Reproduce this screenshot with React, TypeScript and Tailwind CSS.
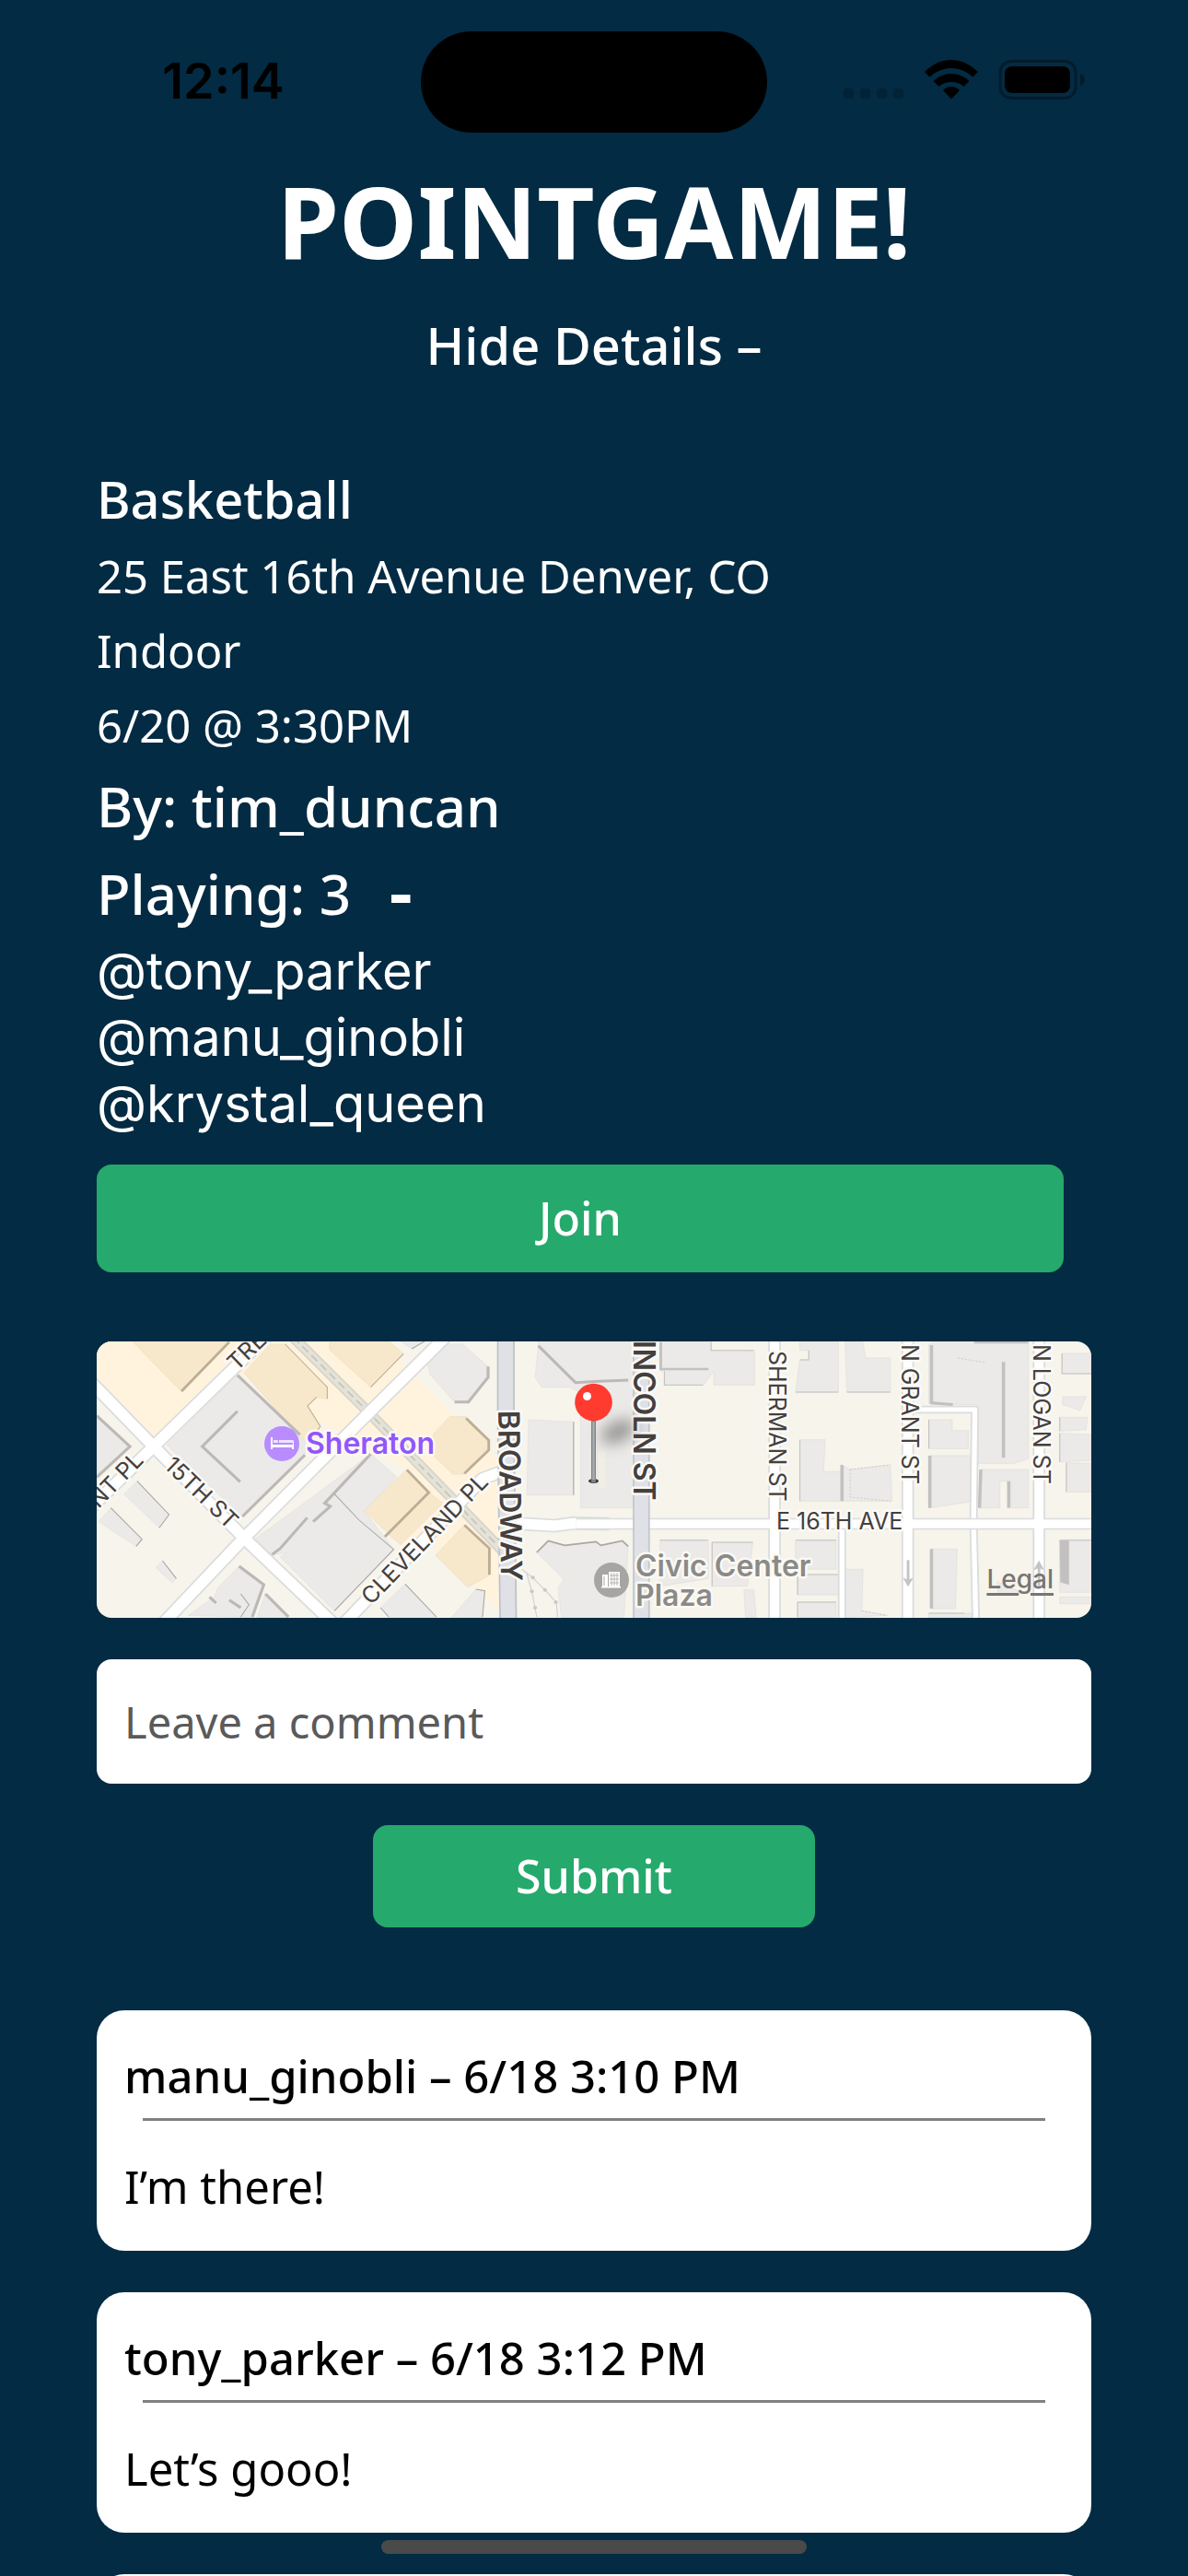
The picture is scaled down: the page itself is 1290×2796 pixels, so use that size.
import { useState } from "react";

const handles = ["@tony_parker", "@manu_ginobli", "@krystal_queen"];

const comments = [
  { title: "manu_ginobli – 6/18 3:10 PM", body: "I’m there!" },
  { title: "tony_parker – 6/18 3:12 PM", body: "Let’s gooo!" },
];

function StatusBar() {
  return (
    <header className="grid h-44 grid-cols-[1fr_376px_1fr] text-black">
      <div className="flex justify-center pt-[60px]">
        <span className="ml-7 font-['Inter'] text-[54px] leading-[56px] font-semibold">12:14</span>
      </div>
      <div className="mt-[34px] h-[110px] rounded-full bg-black" />
      <div className="flex items-start justify-end pt-[62px] pr-[111px]">
        <svg width="66" height="48" viewBox="0 0 66 48" aria-hidden="true">
          {[0, 18, 36, 54].map((x) => (
            <rect key={x} x={x} y="34" width="11" height="11" rx="4" fill="#022236" />
          ))}
        </svg>
        <svg className="ml-[21px]" width="60" height="48" viewBox="0 0 60 48" aria-hidden="true">
          <path d="M1 16Q14 3 30 3T59 16L53.500 21.500Q43 12 30 12T6.500 21.500Z" />
          <path d="M10.500 26Q19 18 30 18T49.500 26L43.500 32Q38 27 30 27T16.500 32Z" />
          <path d="M21 36Q25 32 30 32T39 36L30 45.500Z" />
        </svg>
        <svg className="ml-[21px]" width="95" height="48" viewBox="0 0 95 48" aria-hidden="true">
          <rect x="2" y="4.500" width="82" height="40" rx="12" fill="none" stroke="#021c2c" strokeWidth="3" />
          <rect x="7" y="10" width="71" height="29" rx="8" />
          <path d="M89 18Q94 20 94 24.500T89 31Z" fill="#021c2c" />
        </svg>
      </div>
    </header>
  );
}

const cream = [
  "42,47 520,47 215,365 42,180",
  "470,150 575,47 900,47 1010,160 1130,290 1265,430 1265,925 1080,725 965,710 855,600 985,465 700,300",
];

const tanBlocks = [
  "150,47 440,47 300,212",
  "490,150 570,57 615,57 743,197 743,235 710,230 683,258 722,325 700,365 665,365",
  "750,47 750,75 875,197 975,88 930,47",
  "1115,293 1165,293 1235,370 1235,400 1160,480 1125,480 1070,425 1065,350",
  "985,465 1052,540 1095,575 965,710 855,600",
  "1160,645 1235,720 1235,810 1170,848 1072,745",
];

const westBlocks = [
  "470,158 675,370 675,420 485,620 255,385",
  "42,290 143,390 42,490",
  "165,503 262,612 232,655 125,545",
  "85,590 180,692 162,715 48,635",
  "242,762 284,820 272,834 222,785",
  "1075,75 1095,57 1155,57 1232,130 1232,170 1170,245 1130,245 1055,155 1048,115",
  "875,415 955,490 855,600 945,725 765,925 600,750 620,735 575,745 525,690",
  "1385,57 1385,47 1680,47 1680,590 1513,590 1513,215 1480,197 1395,197 1375,165",
  "1355,303 1492,310 1492,548 1350,548",
  "1415,697 1465,712 1560,700 1575,712 1640,697 1658,715 1645,947 1455,947 1445,850 1462,822 1380,735",
  "475,780 550,840 515,947 320,940 400,880 410,850",
  "555,870 625,947 530,947",
  "980,838 1075,947 930,947 905,915",
  "1195,855 1222,860 1215,947 1120,947",
  "1040,47 1000,72 965,47",
];

const eastBlocks = [
  "217,47 370,47 370,77 502,80 502,190 378,190 378,145 347,190 228,190 228,145 217,145",
  "640,47 757,47 757,213 627,213 640,108 667,108 667,77 640,77",
  "778,47 830,47 840,102 915,102 915,213 783,213",
  "1032,60 1050,47 1335,47 1335,430 1290,445 1182,445 1182,255 1032,250",
  "1032,303 1103,303 1103,338 1152,338 1152,397 1032,397",
  "1032,420 1160,420 1160,570 1032,590",
  "1190,465 1335,465 1335,590 1282,590 1282,503 1248,503 1248,590 1183,590",
  "640,368 717,368 712,472 765,472 765,450 793,465 915,450 920,568 640,568",
  "1437,87 1526,87 1526,153 1437,153",
  "1440,228 1510,228 1492,272 1437,253",
  "1430,295 1514,295 1510,335 1430,340",
  "1430,347 1526,352 1526,435 1430,440",
  "1450,443 1526,445 1526,538 1450,538",
  "1430,695 1526,695 1526,865 1430,865",
  "1430,880 1526,880 1526,902 1430,902",
  "215,695 362,695 362,820 215,845",
  "373,702 497,702 480,845 373,845",
  "627,695 750,695 750,790 627,790",
  "633,807 765,807 765,873 633,873",
  "633,897 750,897 750,947 633,947",
  "778,790 832,790 828,925 905,940 778,947",
  "1040,724 1118,724 1113,918 1040,918",
  "1032,933 1160,933 1160,947 1032,947",
  "470,857 500,857 507,947 475,947",
  "1240,830 1308,862 1308,873 1243,873",
];

const westRoads = [
  "0,615 215,390 560,30",
  "20,175 215,390 490,688 760,965",
  "245,965 490,688 870,280 1110,25",
  "795,965 1215,495 1290,465",
  "1310,640 1435,648 1490,640 1600,642",
];

const eastRoads = ["-40,642 1560,642", "563,30 563,960", "968,30 968,960", "1367,30 1367,960"];

const alleys = ["768,642 768,960", "968,270 1172,270 1168,640 1175,960"];

type LabelProps = { x: number; y: number; turn: number; size?: number; heavy?: boolean; children: string };

function StreetLabel({ x, y, turn, size = 25, heavy = false, children }: LabelProps) {
  return (
    <text
      transform={`translate(${x} ${y}) rotate(${turn})`}
      fontSize={size}
      fontWeight={heavy ? 600 : 400}
      fill="#44403e"
      stroke="#fbfaf7"
      strokeWidth="5"
      strokeLinejoin="round"
      paintOrder="stroke"
    >
      {children}
    </text>
  );
}

type RoadsProps = { lines: string[]; width: number; casing?: string; fill?: string };

function Roads({ lines, width, casing = "#dadcdd", fill = "#ffffff" }: RoadsProps) {
  return (
    <g fill="none" strokeLinejoin="round">
      {lines.map((points) => (
        <polyline key={points} points={points} stroke={casing} strokeWidth={width + 10} />
      ))}
      {lines.map((points) => (
        <polyline key={points} points={points} stroke={fill} strokeWidth={width} />
      ))}
    </g>
  );
}

function Blocks({ shapes, fill, edge }: { shapes: string[]; fill: string; edge: string }) {
  return (
    <g fill={fill} stroke={edge} strokeWidth="2">
      {shapes.map((points) => (
        <polygon key={points} points={points} />
      ))}
    </g>
  );
}

function VenueMap() {
  return (
    <div className="relative mt-[75px] h-[300px] overflow-hidden rounded-2xl bg-[#f6f4eb]">
      <svg className="h-full w-full font-['Inter']" viewBox="0 0 1080 300" preserveAspectRatio="xMidYMid slice" role="img" aria-label="Map of the game location">
        <defs>
          <filter id="soft" x="-60%" y="-100%" width="220%" height="300%">
            <feGaussianBlur stdDeviation="8" />
          </filter>
        </defs>
        <g transform="translate(-15 -16) scale(.357143 .333333)">
          <g fill="#fff3dd">
            {cream.map((points) => (
              <polygon key={points} points={points} />
            ))}
          </g>
          <Blocks shapes={westBlocks} fill="#ebeae8" edge="#e2e0de" />
          <Blocks shapes={tanBlocks} fill="#f8e8cb" edge="#eedec2" />
          <g fill="none" stroke="#bcb8b6" strokeWidth="9">
            <path d="M470 275L363 390L478 505M675 418L485 618M470 158L660 352M42 290L143 390L42 490" />
            <path d="M875 415L735 575L752 585L700 635M682 622L600 722L575 742M475 780L550 840L515 945M555 870L625 945" />
            <path d="M1232 130V165L1172 245H1130M1385 62L1498 182L1568 178M385 880L405 900M445 890L480 915" />
            <path d="M1568 178L1658 174" />
          </g>
          <g fill="none" stroke="#aaa6a3" strokeWidth="3">
            <path d="M765 545L840 630L945 725L765 925M1492 310V548M165 503L262 612L232 655M85 590L180 692L162 715" />
            <path d="M242 762L284 820M980 838L1075 945M905 915L930 945M1195 855L1222 860L1215 945M1040 47L1000 72M480 870L505 905L480 945" />
            <path d="M1380 735L1415 697L1465 712L1560 700L1575 712L1640 697L1658 715" strokeWidth="5" />
          </g>
          <g fill="none" stroke="#bcae96" strokeWidth="8">
            <path d="M445 50L300 210M1165 298L1234 370V402L1160 478M985 466L1052 540L918 684M1160 646L1236 722V808" />
            <path d="M615 57L743 197V235M710 230L683 258L722 325L700 355M975 88L875 197" strokeWidth="3" />
          </g>
          <Roads lines={["640,35 870,280 1290,745"]} width={24} casing="#d6d4cb" fill="#e5e2d6" />
          <polyline points="640,35 870,280 1290,745" fill="none" stroke="#c4c5c1" strokeWidth="5" strokeDasharray="26 14" />
          <Roads lines={westRoads} width={34} />
          <path d="M1335 790L1365 815L1405 857L1440 898L1443 945M1350 805L1365 862L1380 945" fill="none" stroke="#cfcfce" strokeWidth="3" />
          <g fill="#c9c9c8">
            <circle cx="1368" cy="817" r="6" />
            <circle cx="1405" cy="857" r="6" />
            <circle cx="1438" cy="897" r="6" />
            <circle cx="1365" cy="862" r="6" />
            <circle cx="1375" cy="915" r="6" />
          </g>
          <Roads lines={["1286,30 1286,300 1293,960"]} width={44} casing="#bfc2c8" fill="#dfe1e7" />
        </g>
        <g transform="translate(535 -16) scale(.357143 .333333)">
          <Blocks shapes={eastBlocks} fill="#ebeae8" edge="#dfdddb" />
          <g fill="none" stroke="#c2c1bf">
            <path d="M1040 60V248L1105 254M1259 115V427M768 450V568M1190 465L1186 590M1275 503V590M1035 420V590M1040 724V918M1170 50H1335" strokeWidth="10" />
            <path d="M217 50V142M217 138H362" strokeWidth="8" />
            <path d="M1430 697H1458V840L1432 832Z" fill="#c2c1bf" />
            <path d="M228 145V190H345M370 50V77H500M627 213H757M640 108H667V78M783 213H915M640 368V568M1032 303V397M1437 87V153H1526" strokeWidth="3" />
            <path d="M1430 295V340M1430 347V440M1450 443V538M215 695H360M373 845V702H497M627 695H750M633 807H765M633 873V807M633 945V897H750M1032 933H1140M1430 695H1526" strokeWidth="3" />
            <path d="M793 465L915 450M793 465V555L915 568M1120 102L1205 117M828 925L905 940" strokeWidth="2" strokeDasharray="6 5" />
          </g>
          <Roads lines={alleys} width={15} />
          <Roads lines={eastRoads} width={28} />
          <Roads lines={["158,30 158,960"]} width={42} casing="#c3c6cc" fill="#dfe1e7" />
          <g fill="#c3c3c3" stroke="#c3c3c3">
            <path d="M969 760V825" strokeWidth="8" />
            <path d="M954 818L969 825L984 818L969 846Z" strokeWidth="1" />
            <path d="M1367 850V785" strokeWidth="8" />
            <path d="M1351 792L1367 785L1382 792L1367 762Z" strokeWidth="1" />
          </g>
          <path d="M28 405H48V523H28Z" fill="#f1eee6" />
        </g>

        <StreetLabel x={152} y={33} turn={-44}>TRE</StreetLabel>
        <StreetLabel x={2} y={182} turn={-46}>NT PL</StreetLabel>
        <StreetLabel x={72} y={136} turn={44}>15TH ST</StreetLabel>
        <StreetLabel x={298} y={287} turn={-46}>CLEVELAND PL</StreetLabel>
        <StreetLabel x={436} y={75} turn={89} size={32} heavy>BROADWAY</StreetLabel>
        <StreetLabel x={583} y={-1} turn={90} size={32} heavy>INCOLN ST</StreetLabel>
        <StreetLabel x={730} y={10} turn={90}>SHERMAN ST</StreetLabel>
        <StreetLabel x={874} y={3} turn={90}>N GRANT ST</StreetLabel>
        <StreetLabel x={1017} y={3} turn={90}>N LOGAN ST</StreetLabel>
        <StreetLabel x={738} y={204} turn={0}>E 16TH AVE</StreetLabel>

        <circle cx="201" cy="111" r="19" fill="#b88cff" />
        <path d="M189 104h2v8h22v-3h1v8h-2v-2h-21v2h-2z" fill="#fff" />
        <path d="M192 107h3a2 2 0 0 1 2 3h-5zM198 107h14a2 2 0 0 1 2 3h-16z" fill="#efe3ff" />
        <g fontSize="32" fontWeight="600" stroke="#fbf9f3" strokeWidth="5" strokeLinejoin="round" paintOrder="stroke">
          <text x="227" y="122" fill="#9256fc">Sheraton</text>
          <text x="585" y="255" fill="#8b8a89">Civic Center</text>
          <text x="585" y="287" fill="#8b8a89">Plaza</text>
        </g>

        <circle cx="559" cy="259" r="19" fill="#a6a5a3" />
        <path d="M549 253h6v13h-6zM556 250h12v16h-12zM548 266h21v1.500h-21z" fill="#fff" />
        <path d="M559 251v14M562 251v14M565 251v14M557 254h10M557 258h10M557 262h10" stroke="#b5b4b2" strokeWidth="1" />
        <path d="M551 255v10" stroke="#d5d4d3" strokeWidth="2" />

        <ellipse cx="566" cy="98" rx="20" ry="11" fill="#444" opacity=".5" filter="url(#soft)" transform="rotate(-25 566 98)" />
        <ellipse cx="539.500" cy="151.500" rx="5.500" ry="2.500" fill="#3f3f3f" />
        <path d="M539.500 85V151" stroke="#7f8284" strokeWidth="5" strokeLinecap="round" />
        <path d="M539.500 87V150" stroke="#a9acae" strokeWidth="2.500" />
        <circle cx="539.500" cy="66" r="20.300" fill="#ff3b30" />
        <circle cx="532.500" cy="59.500" r="4.500" fill="#fff" />
      </svg>
      <a
        href="#legal"
        className="absolute right-[41px] bottom-[26px] font-['Inter'] text-[28px] leading-8 font-medium text-[#787572] underline decoration-[3px] underline-offset-[5px]"
      >
        Legal
      </a>
    </div>
  );
}

export default function App() {
  const [comment, setComment] = useState("");

  return (
    <div className="relative h-screen overflow-hidden bg-[#032b43] font-['Noto_Sans',sans-serif] text-white">
      <StatusBar />

      <h1 className="text-center text-[108px] leading-[128px] font-bold">POINTGAME!</h1>
      <div className="mt-[34px] flex justify-center">
        <button type="button" className="text-[56px] leading-[72px] font-medium">
          Hide Details –
        </button>
      </div>

      <main className="px-[105px] pt-[87px]">
        <section>
          <h2 className="text-[56px] leading-[88px] font-medium">Basketball</h2>
          <div className="text-[49px] leading-[81px]">
            <p>25 East 16th Avenue Denver, CO</p>
            <p>Indoor</p>
            <p>6/20 @ 3:30PM</p>
          </div>
          <div className="text-[60px] leading-[95px] font-medium">
            <p>By: tim_duncan</p>
            <div className="flex items-center">
              <span>Playing: 3</span>
              <button type="button" aria-label="Hide players" className="ml-10 font-['Inter'] text-[60px] leading-[88px] font-black">
                -
              </button>
            </div>
          </div>
          <ul className="font-['Inter'] text-[56px] leading-[72px]">
            {handles.map((name) => (
              <li key={name}>{name}</li>
            ))}
          </ul>
          <button type="button" className="mt-[30px] block h-[117px] w-[calc(100%-30px)] rounded-2xl bg-[#26a96c] text-[50px] font-medium">
            Join
          </button>
        </section>

        <VenueMap />

        <form onSubmit={(event) => event.preventDefault()}>
          <input
            type="text"
            aria-label="Leave a comment"
            placeholder="Leave a comment"
            value={comment}
            onChange={(event) => setComment(event.target.value)}
            className="mt-[45px] block h-[135px] w-full rounded-2xl bg-white px-[30px] text-[47px] text-black placeholder:text-[#5a5a5a]"
          />
          <button type="submit" className="mx-auto mt-[45px] block h-[111px] w-[480px] rounded-2xl bg-[#26a96c] text-[50px] font-medium">
            Submit
          </button>
        </form>

        <section className="mt-[90px] flex flex-col gap-[45px] text-[49px] leading-[70px] text-black">
          {comments.map(({ title, body }) => (
            <article key={title} className="rounded-[30px] bg-white px-[30px] pt-9 pb-[35px]">
              <h3 className="font-medium">{title}</h3>
              <hr className="mx-5 mt-[11px] mb-9 border-t-[3px] border-[#808080]" />
              <p>{body}</p>
            </article>
          ))}
          <article className="h-[261px] rounded-[30px] bg-white" />
        </section>
      </main>

      <div className="absolute bottom-6 left-1/2 h-[15px] w-[462px] -translate-x-1/2 rounded-full bg-[#4a4a4a]" />
    </div>
  );
}
